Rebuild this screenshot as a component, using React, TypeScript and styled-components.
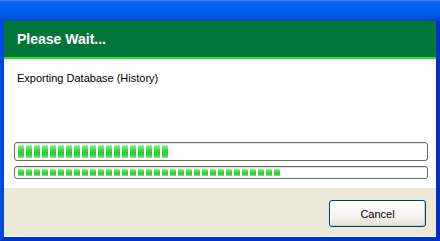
import React from 'react'
import styled, {createGlobalStyle} from 'styled-components';

const GlobalStyle = createGlobalStyle`
html, body {
margin: 0;
padding: 0;
background: #ffffff;
}
body {
font-family: "Liberation Sans", Arial, sans-serif;
}
`

type IProgress = {
    blocks: number;
    tall?: boolean;
}

const Progress = ({blocks, tall}: IProgress) => {
    // each block is 6px with a 2px gap
    const fillWidth = blocks * 8 - 2;

  return (
    <Track $tall={tall}>
        <Fill $tall={tall} style={{width: fillWidth}}/>
    </Track>
  )
}

const App = () => {
  return (
    <Window>
        <GlobalStyle/>
        <TitleBar/>
        <Frame>
            <Header>
                <Heading>Please Wait...</Heading>
            </Header>
            <Content>
                <Message>Exporting Database (History)</Message>
                <Bars>
                    <Progress blocks={19} tall/>
                    <Progress blocks={33}/>
                </Bars>
            </Content>
            <Footer>
                <Button type='button'>Cancel</Button>
            </Footer>
        </Frame>
    </Window>
  )
}

export default App

const Window = styled.div`
width: 440px;
height: 241px;
display: flex;
flex-direction: column;
background: #0831d9;
overflow: hidden;
`
const TitleBar = styled.div`
height: 21px;
flex: none;
background: linear-gradient(to bottom, #3d8cff 0, #0a5ff0 2px, #0062f2 8px, #0058e8 16px, #0046d4 21px);
`
const Frame = styled.div`
flex: 1;
display: flex;
flex-direction: column;
border-left: 4px solid #0049e0;
border-right: 4px solid #0030c8;
border-bottom: 4px solid #0032c4;
box-shadow: inset -1px 0 0 #001ea0;
`
const Header = styled.div`
height: 36px;
flex: none;
background: #00753a;
border-bottom: 2px solid #12f22a;
display: flex;
align-items: center;
padding-left: 13px;
box-sizing: content-box;
`
const Heading = styled.h1`
margin: 0;
color: #ffffff;
font-family: "Liberation Sans", Arial, sans-serif;
font-size: 14px;
font-weight: bold;
`
const Content = styled.div`
flex: 1;
background: #ffffff;
display: flex;
flex-direction: column;
padding: 13px 8px 0 10px;
`
const Message = styled.div`
font-size: 11px;
line-height: 13px;
color: #000000;
padding-left: 3px;
`
const Bars = styled.div`
display: flex;
flex-direction: column;
gap: 5px;
margin-top: 57px;
`
const Track = styled.div<{$tall?: boolean}>`
height: ${p => p.$tall ? 19 : 13}px;
box-sizing: border-box;
border: 1px solid #686868;
border-radius: 3px;
background: #ffffff;
box-shadow: inset 0 1px 0 #e4e4e4;
padding: 2px;
display: flex;
align-items: center;
`
const Fill = styled.div<{$tall?: boolean}>`
height: ${p => p.$tall ? 13 : 7}px;
margin-left: 1px;
background:
    repeating-linear-gradient(to right, transparent 0 6px, #ffffff 6px 8px),
    linear-gradient(to bottom, #b6f0b6 0%, #4fdc4f 30%, #26cc26 60%, #3ad43a 80%, #8ee68e 100%);
`
const Footer = styled.div`
height: 49px;
flex: none;
background: #ece9d8;
border-bottom: 1px solid #ffffff;
display: flex;
justify-content: flex-end;
align-items: flex-start;
padding: 12px 10px 0 0;
box-sizing: border-box;
`
const Button = styled.button`
width: 97px;
height: 27px;
border: 1px solid #003c74;
border-radius: 3px;
background: linear-gradient(to bottom, #ffffff 0%, #f6f5f0 60%, #e3e1d6 100%);
box-shadow: inset -1px -1px 0 #d6d0c0, inset 1px 1px 0 #ffffff;
font-family: "Liberation Sans", Arial, sans-serif;
font-size: 11px;
color: #000000;
padding: 0;
cursor: pointer;
`
